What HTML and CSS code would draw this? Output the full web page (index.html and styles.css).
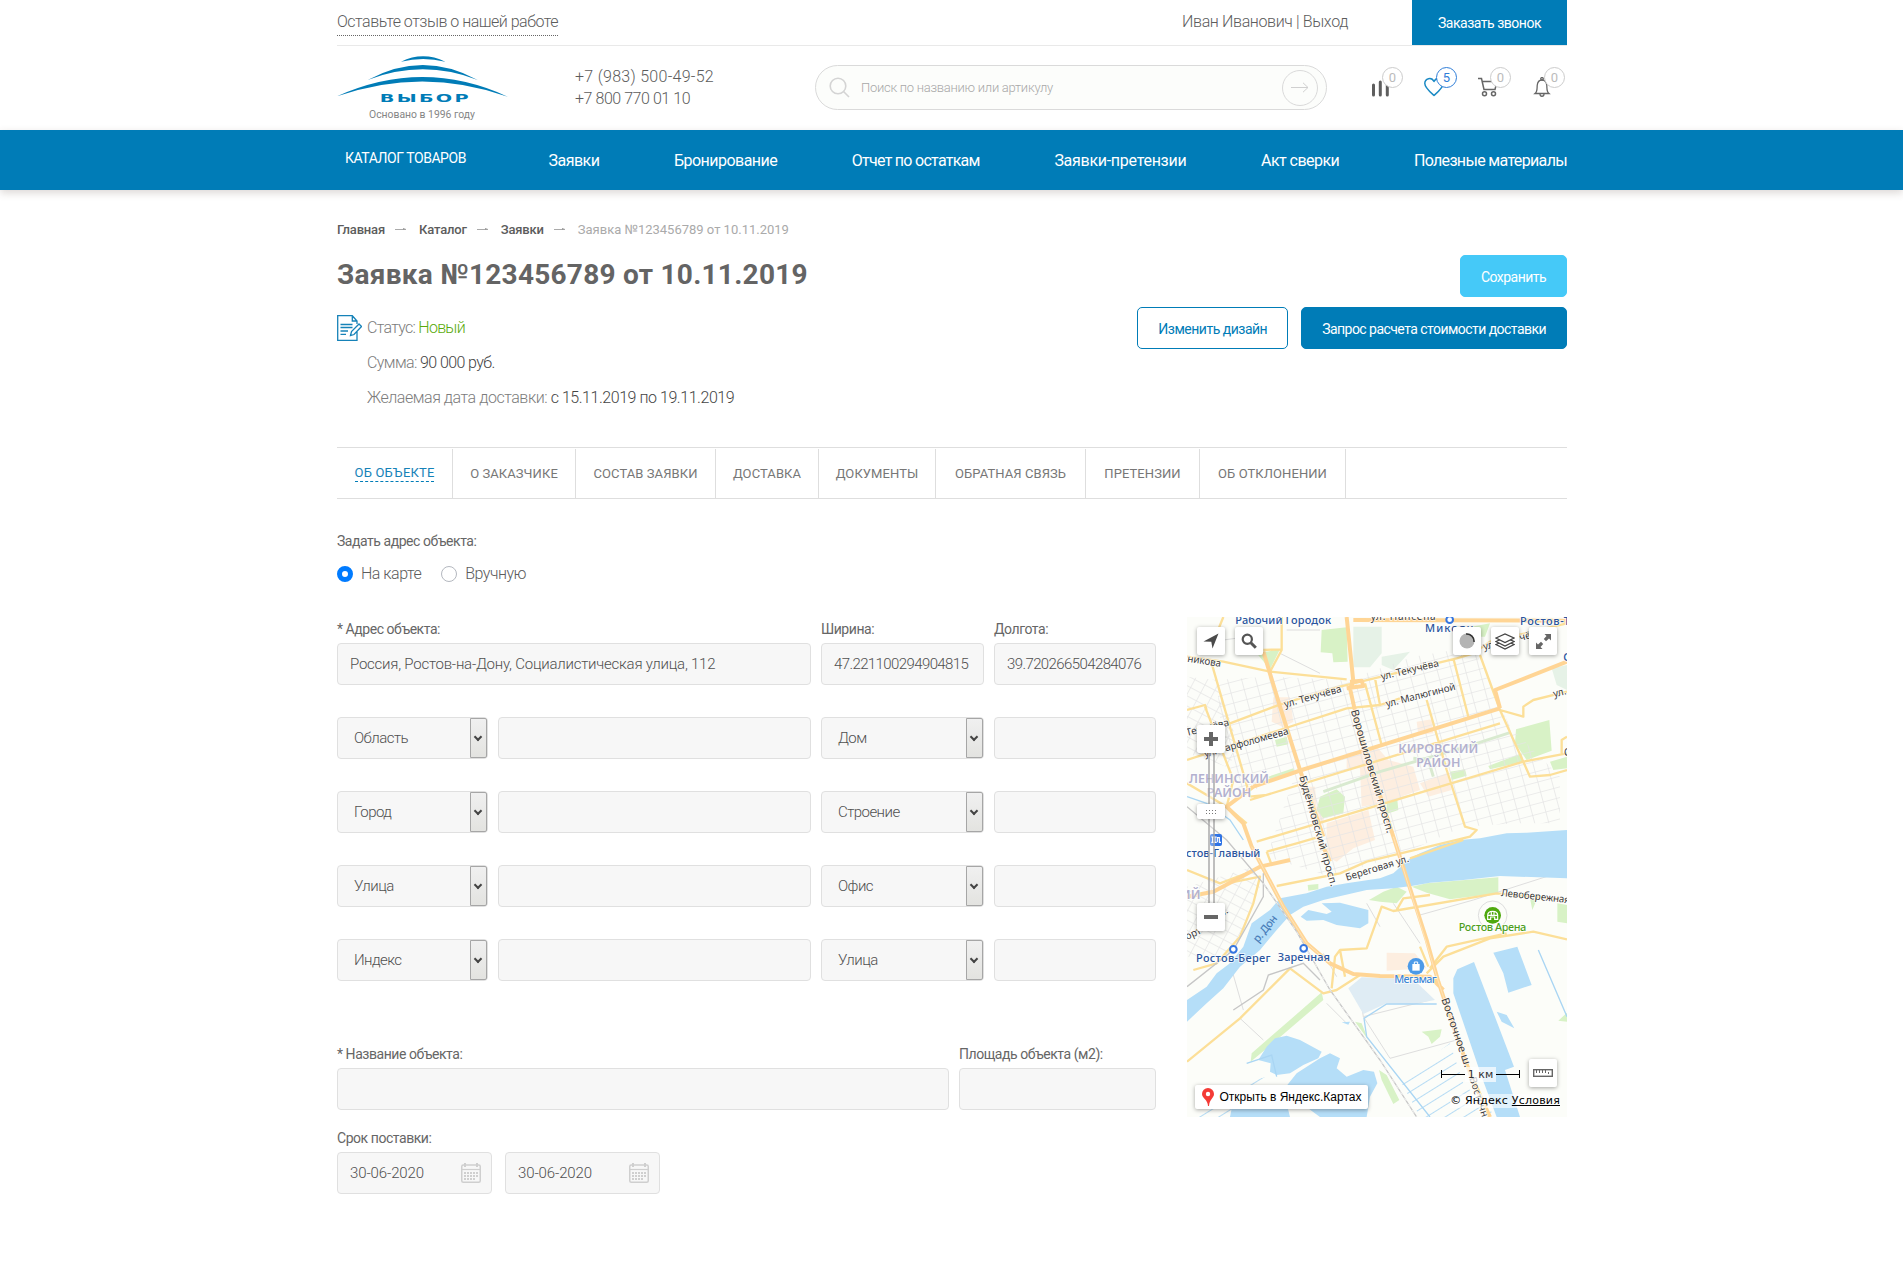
FILE: index.html
```html
<!DOCTYPE html>
<html lang="ru">
<head>
<meta charset="utf-8">
<title>Заявка №123456789 от 10.11.2019</title>
<link rel="stylesheet" href="styles.css">
</head>
<body>
<header class="header">
  <div class="container">
    <div class="topbar">
      <a class="feedback">Оставьте отзыв о нашей работе</a>
      <div class="account"><span class="user">Иван Иванович | Выход</span><a class="call">Заказать звонок</a></div>
    </div>
    <div class="brand-row">
      <a class="logo">
        <svg width="170" height="67" viewBox="0 0 510 201" fill="#007cb7">
          <path d="M192 17Q258-15 325 17Q258 1 192 17Z"/>
          <path d="M92 72Q258-18 422 72Q258 8 92 72Z"/>
          <path d="M0 121Q258 5 512 122Q258 31 0 121Z"/>
          <text x="128" y="138" class="logo-name" textLength="274" lengthAdjust="spacingAndGlyphs">ВЫБОР</text>
          <text x="96" y="187" class="logo-sub" textLength="318" lengthAdjust="spacingAndGlyphs">Основано в 1996 году</text>
        </svg>
      </a>
      <div class="phones"><span>+7 (983) 500-49-52</span><span class="p2">+7 800 770 01 10</span></div>
      <div class="search">
        <svg width="21" height="21" viewBox="0 0 21 21" fill="none" stroke="#d4d4d4" stroke-width="1.6"><circle cx="9" cy="9" r="7.8"/><path d="M14.5 14.5L20 20"/></svg>
        <span class="ph">Поиск по названию или артикулу</span>
        <span class="go"><svg width="18" height="11" viewBox="0 0 18 11" fill="none" stroke="#d0d0d0"><path d="M0 5.5H17M12 .8L17 5.5L12 10.2"/></svg></span>
      </div>
      <div class="tools">
        <a class="tool"><svg width="20" height="20" viewBox="0 0 20 20" stroke="#5e5e5e" stroke-width="3" stroke-linecap="round"><path d="M3.5 8V18M10.3 5V18M17.3 5V18"/></svg><b>0</b></a>
        <a class="tool on"><svg width="20" height="20" viewBox="0 0 20 20" fill="none" stroke="#1b8ac4" stroke-width="1.5" stroke-linejoin="round"><path d="M10 18.5C5 14 .8 10.500 .8 6.500C.8 1.500 7.500-.5 10 4.500C12.500-.5 19.200 1.500 19.200 6.500C19.200 10.500 15 14 10 18.500Z"/></svg><b>5</b></a>
        <a class="tool"><svg width="20" height="20" viewBox="0 0 20 20" fill="none" stroke="#666" stroke-width="1.500"><path d="M0 1.500H3.500L6 12.500H17L19 4.500H4.500"/><circle cx="6.500" cy="16.700" r="2"/><circle cx="15.500" cy="16.700" r="2"/></svg><b>0</b></a>
        <a class="tool"><svg width="20" height="20" viewBox="0 0 20 20" fill="none" stroke="#666" stroke-width="1.300"><path d="M3 16.500C5.500 14.500 5 11.500 5.200 8.500C5.500 5 7.500 3 10 3S14.500 5 14.800 8.500C15 11.500 14.500 14.500 17 16.500Z"/><circle cx="10" cy="1.800" r="1.300"/><path d="M8 17C8 20 12 20 12 17"/></svg><b>0</b></a>
      </div>
    </div>
  </div>
  <nav class="nav"><div class="container nav-in">
    <a class="cat">КАТАЛОГ ТОВАРОВ</a><a>Заявки</a><a>Бронирование</a><a class="stock">Отчет по остаткам</a><a class="claims">Заявки-претензии</a><a>Акт сверки</a><a class="useful">Полезные материалы</a>
  </div></nav>
</header>
<main class="container">
  <div class="crumbs">
    <a>Главная</a><i></i><a>Каталог</a><i></i><a>Заявки</a><i></i><span>Заявка №123456789 от 10.11.2019</span>
  </div>
  <section class="summary">
    <div class="info">
      <h1>Заявка №123456789 от 10.11.2019</h1>
      <div class="facts">
        <svg class="doc" width="25" height="26" viewBox="0 0 25 26" fill="none" stroke="#1682b8" stroke-width="1.300"><path d="M20 16V25.300H.7V.7H15.300L20 6V9M15.300.7V6H20M3.500 9.500H15.500M3.500 12.500H15.500M3.500 16H11M3.500 19.300H9M13.500 20.500L14.500 16.500L22 9L24.500 11.500L17 19.500Z"/></svg>
        <p class="status">Статус: <em class="new">Новый</em></p>
        <p>Сумма: <em>90 000 руб.</em></p>
        <p class="wish">Желаемая дата доставки: <em>с 15.11.2019 по 19.11.2019</em></p>
      </div>
    </div>
    <div class="actions">
      <a class="btn light">Сохранить</a>
      <div class="pair"><a class="btn line">Изменить дизайн</a><a class="btn">Запрос расчета стоимости доставки</a></div>
    </div>
  </section>
  <div class="tabs">
    <a class="active"><span>ОБ ОБЪЕКТЕ</span></a><a>О ЗАКАЗЧИКЕ</a><a>СОСТАВ ЗАЯВКИ</a><a>ДОСТАВКА</a><a>ДОКУМЕНТЫ</a><a>ОБРАТНАЯ СВЯЗЬ</a><a>ПРЕТЕНЗИИ</a><a>ОБ ОТКЛОНЕНИИ</a>
  </div>
  <div class="mode">
    <div class="label">Задать адрес объекта:</div>
    <div class="radios"><label class="radio checked">На карте</label><label class="radio">Вручную</label></div>
  </div>
  <div class="columns">
    <form class="form">
      <div class="grid">
        <div class="field wide"><span class="label">* Адрес объекта:</span><div class="input">Россия, Ростов-на-Дону, Социалистическая улица, 112</div></div>
        <div class="field coord"><span class="label">Ширина:</span><div class="input">47.221100294904815</div></div>
        <div class="field coord"><span class="label">Долгота:</span><div class="input">39.720266504284076</div></div>
        <div class="select">Область</div><div class="input"></div><div class="select">Дом</div><div class="input"></div>
        <div class="select">Город</div><div class="input"></div><div class="select">Строение</div><div class="input"></div>
        <div class="select">Улица</div><div class="input"></div><div class="select">Офис</div><div class="input"></div>
        <div class="select">Индекс</div><div class="input"></div><div class="select">Улица</div><div class="input"></div>
      </div>
      <div class="object">
        <div class="field"><span class="label">* Название объекта:</span><div class="input"></div></div>
        <div class="field"><span class="label">Площадь объекта (м2):</span><div class="input"></div></div>
      </div>
      <div class="term">
        <span class="label">Срок поставки:</span>
        <div class="dates">
          <div class="input date"><span>30-06-2020</span><svg width="20" height="20" viewBox="0 0 20 20" fill="none" stroke="#cfcfcf"><rect x=".75" y="2" width="18.500" height="17.250" rx="1.500" stroke-width="1.500"/><path d="M1 6.500H19" stroke-width="1.200"/><path d="M4 0V4M16 0V4" stroke-width="2"/><path d="M3 10H17M3 13H17M3 16H14" stroke-width="2" stroke-dasharray="2 1"/></svg></div>
          <div class="input date"><span>30-06-2020</span><svg width="20" height="20" viewBox="0 0 20 20" fill="none" stroke="#cfcfcf"><rect x=".75" y="2" width="18.500" height="17.250" rx="1.500" stroke-width="1.500"/><path d="M1 6.500H19" stroke-width="1.200"/><path d="M4 0V4M16 0V4" stroke-width="2"/><path d="M3 10H17M3 13H17M3 16H14" stroke-width="2" stroke-dasharray="2 1"/></svg></div>
        </div>
      </div>
    </form>
    <div class="map">
      <svg class="canvas" width="380" height="500" viewBox="21 21 1140 1500">
        <defs>
          <pattern id="blocks" width="41" height="31" patternUnits="userSpaceOnUse" patternTransform="rotate(-15)"><path d="M0 1H41M1 0V31" stroke="#e4e4e4" stroke-width="2.500" fill="none"/></pattern>
          <pattern id="lots" width="34" height="27" patternUnits="userSpaceOnUse" patternTransform="rotate(28)"><path d="M0 1H34M1 0V27" stroke="#e4e4e4" stroke-width="2.500" fill="none"/></pattern>
          <pattern id="canals" width="28" height="30" patternUnits="userSpaceOnUse" patternTransform="rotate(-32)"><path d="M0 1H28" stroke="#a9d5f3" stroke-width="3"/></pattern>
        </defs>
        <rect x="21" y="21" width="1140" height="1500" fill="#fcfdf9"/>
        <g fill="#fdeee0">
          <path d="M280 262L330 262L340 335L310 352L275 335ZM500 430L590 410L625 450L700 470L720 540L650 565L600 580L545 590L540 475L500 475ZM720 520L800 490L815 540L745 560ZM710 335L755 328L760 370L715 375ZM440 640L565 600L585 690L520 715L470 755L440 740ZM375 530L405 530L410 590L435 590L430 640L395 640ZM620 1028L705 1030L740 1075L620 1082Z"/>
        </g>
        <g fill="#d8f2c6">
          <path d="M425 60L500 52L503 155L460 157L457 130L422 127ZM230 130L300 118L270 178ZM875 50L930 40L915 80L880 80ZM1008 358L1108 330L1115 422L1040 450L1005 400ZM925 468L1025 430L1030 455L930 478ZM285 390L320 380L325 403L290 410ZM420 560L470 538L495 560L490 610L430 625L410 600ZM265 500L340 475L345 490L270 508ZM810 485L855 478L860 497L815 510ZM620 580L652 570L655 600L620 612ZM1110 455L1161 440L1161 475L1120 480Z"/>
          <path d="M695 830L740 820L955 802V850L810 868L740 848ZM567 870L610 845L650 830L680 845L650 880L600 875ZM383 825L415 822V838L385 842ZM1132 880L1161 885V940L1132 935ZM1050 865L1072 865L1057 900ZM425 1147L430 1170L290 1290L212 1355L215 1330ZM725 1265L785 1258L780 1280L755 1302L745 1280ZM597 1380L620 1395L658 1470L640 1482L605 1410ZM525 1235L545 1240L565 1290ZM1135 1232L1161 1208V1235Z"/>
        </g>
        <path d="M520 50H605V130L570 172H520ZM605 140L690 125L640 180L605 165ZM1115 175L1161 165V240L1130 225Z" fill="#e6f2e7"/>
        <path d="M110 210L260 200L500 210L700 140L880 110L990 350L1140 500V640L1010 640L850 650L660 735L450 800L260 740L350 480L180 560L130 430Z" fill="url(#blocks)"/>
        <path d="M21 200L110 210L180 420L140 470L21 430Z" fill="url(#lots)"/>
        <path d="M21 830L220 770L240 830L180 970L140 1040L21 1040Z" fill="url(#lots)"/>
        <g fill="none" stroke="#d9ead0" stroke-width="9"><path d="M430 545L600 485L860 410L990 368M700 445L745 450L760 500"/></g>
        <g fill="none" stroke="#dedede" stroke-width="3">
          <path d="M130 90L240 75M320 60L420 60M300 130L420 190M720 915L880 870L1130 790M540 1155L550 1220L750 1170M560 880L600 950M640 880L720 1000M430 1030L470 1100M150 1060L190 1200M180 1225L250 1290M440 1180L500 1240M550 1220L630 1345L830 1290"/>
          <circle cx="938" cy="916" r="43"/>
        </g>
        <g fill="#b5def8">
          <path d="M1161 660L1040 668L980 670L900 685L840 690L780 705L720 730L690 745L640 790L600 805L500 820L440 830L380 850L300 865L270 900L215 940L190 1010L150 1060L110 1090L80 1130L21 1170V1235L80 1180L130 1135L180 1070L240 1020L290 960L330 915L370 890L430 870L560 840L640 835L695 828L750 818L850 810L960 798L1161 805Z"/>
          <path d="M425 880L480 878L565 900V940L540 955L470 945L430 930L380 932L362 920L385 900L440 912L455 905Z"/>
          <path d="M820 1105L832 1078L882 1056L1002 1370L975 1380L1020 1521H950L905 1400L820 1150Z"/>
          <path d="M940 1028L1012 1010L1055 1125L985 1148L970 1090Z"/>
          <path d="M260 1310L285 1285L320 1277L360 1290L425 1325L415 1345L370 1365L330 1390L290 1395L270 1385L272 1360L235 1350Z"/>
          <path d="M420 1345L450 1330L480 1345L470 1375L500 1400L550 1380L582 1385L592 1420L570 1460L560 1521L420 1521L310 1440L350 1390Z"/>
          <path d="M160 1470L260 1425L310 1440L330 1521H150ZM950 1205L980 1215L1003 1255L965 1235ZM485 1237L510 1235L505 1244Z"/>
        </g>
        <path d="M505 1135L545 1102L700 1108L765 1170L700 1182L620 1180L550 1212Z" fill="#dfecf4"/>
        <path d="M660 1410L810 1300L850 1420L950 1521H720ZM40 1521L80 1450L260 1400L170 1521Z" fill="url(#canals)"/>
        <g fill="none" stroke="#a9d5f3" stroke-width="4">
          <path d="M770 1182L620 1182L552 1225L560 1280L750 1521M1075 1020L1161 1220M200 1360L275 1335L290 1400M21 560L80 580L150 630L190 690"/>
        </g>
        <g fill="none" stroke="#fcdf98" stroke-width="7" stroke-linejoin="round">
          <path d="M110 70L130 21M305 21V120L270 185L130 155L21 140M95 160L210 560L260 555M250 120L305 118M21 450L500 295L600 285M21 300L75 285L80 300M150 340L310 280L480 230L830 145L880 130L930 95L1161 40M75 290L160 510L140 590M21 520L140 590L200 640M500 208L270 185M555 220L605 405M585 205L600 285L660 265M740 270L800 480L855 650L890 660L870 680L560 755L480 790L290 828M820 145L865 320M900 135L960 300L1050 500L1110 495L1161 480M960 300L1030 320V290L1060 270L1161 245M210 570L960 340M230 695L1030 455L1161 430M260 725L350 700L420 680M690 745L850 690M21 780L120 820L200 790M140 820L240 800L220 880L180 980L110 1060L40 1080M21 1355L180 1225L330 1075L430 1150L470 1140L540 1095M455 1135L465 1040L480 1020L560 1015L605 890L640 903L950 850L1161 870M650 900L670 865L750 855M480 1020L495 1100M720 1010L745 1070M740 1090L790 1040L930 985L1060 965L1161 988M750 1075L800 1010L980 970M1161 380L1145 390V430M260 725L275 765"/>
        </g>
        <g fill="none" stroke="#ffd595" stroke-width="12" stroke-linejoin="round">
          <path d="M500 21L520 215L510 235L540 370L640 680L740 990L775 1115L800 1190L870 1390L930 1521M250 125L300 290L360 480L430 680M420 690L450 755M220 530L365 480L960 295M1161 155L945 240L960 295M520 30L1161 32M220 530L140 590L190 640L215 710L310 890L380 1000L450 1060L520 1092L600 1098L750 1100L790 1140M21 860L100 845L240 770L330 750M500 235L550 228L545 212L510 215"/>
        </g>
        <g fill="none" stroke="#ffeccb" stroke-width="2"><path d="M215 710L310 890L380 1000L450 1060M640 680L775 1115L800 1190"/></g>
        <g fill="none" stroke="#c6c6c6" stroke-width="4"><path d="M21 590L140 690L250 820L350 965L450 1140L600 1350L710 1521M250 790V860L160 1020L21 1130M160 1200L250 1140L265 1095L370 1060L420 1110"/></g>
        <path d="M250 820L350 965L450 1140L600 1350L710 1521" fill="none" stroke="#f5f5f5" stroke-width="2.500" stroke-dasharray="12 10"/>
        <g class="street">
          <text x="21" y="155" textLength="102" transform="rotate(9 21 155)">никова</text>
          <text x="605" y="210" textLength="178" transform="rotate(-13.500 605 210)">ул. Текучёва</text>
          <text x="315" y="293" textLength="178" transform="rotate(-15.500 315 293)">ул. Текучёва</text>
          <text x="620" y="292" textLength="215" transform="rotate(-14.500 620 292)">ул. Малюгиной</text>
          <text x="1122" y="262" transform="rotate(-14 1122 262)">ул.</text>
          <text x="21" y="378" textLength="132" transform="rotate(-14 21 378)">Текучёва</text>
          <text x="75" y="442" textLength="262" transform="rotate(-15.500 75 442)">ул. Варфоломеева</text>
          <text x="912" y="120" textLength="180" transform="rotate(-14 912 120)">ул. Текучёва</text>
          <text x="572" y="30" textLength="195">ул. Нансена</text>
          <text class="avenue" x="512" y="302" textLength="385" lengthAdjust="spacingAndGlyphs" transform="rotate(73.500 512 302)">Ворошиловский просп.</text>
          <text x="358" y="500" textLength="345" lengthAdjust="spacingAndGlyphs" transform="rotate(74 358 500)">Будённовский просп.</text>
          <text x="500" y="812" textLength="197" transform="rotate(-17 500 812)">Береговая ул.</text>
          <text x="962" y="858" textLength="208" transform="rotate(6 962 858)">Левобережная</text>
          <text class="avenue" x="784" y="1168" textLength="218" lengthAdjust="spacingAndGlyphs" transform="rotate(71 784 1168)">Восточное ш.</text>
          <text x="868" y="1405" textLength="160" transform="rotate(72 868 1405)">Восточное</text>
          <text x="21" y="990" transform="rotate(-25 21 990)">орт</text><text x="124" y="920" transform="rotate(-30 124 920)">л.</text>
          <text x="1152" y="437">С</text>
        </g>
        <g class="district" text-anchor="middle">
          <text x="775" y="430" textLength="240" lengthAdjust="spacingAndGlyphs">КИРОВСКИЙ</text><text x="775" y="471" textLength="133" lengthAdjust="spacingAndGlyphs">РАЙОН</text>
          <text x="147" y="519" textLength="240" lengthAdjust="spacingAndGlyphs">ЛЕНИНСКИЙ</text><text x="147" y="560" textLength="133" lengthAdjust="spacingAndGlyphs">РАЙОН</text>
          <text x="32" y="867">ИЙ</text>
        </g>
        <g class="station">
          <text x="166" y="42" textLength="287">Рабочий Городок</text>
          <text x="735" y="66" textLength="145">Микоян</text>
          <text x="1020" y="44" textLength="150">Ростов-Т</text>
          <text x="1150" y="153">С</text>
          <text x="18" y="740" textLength="223">стов-Главный</text>
          <text x="48" y="1055" textLength="223">Ростов-Берег</text>
          <text x="293" y="1053" textLength="157">Заречная</text>
          <text x="234" y="1000" textLength="95" transform="rotate(-51 234 1000)" class="river">р. Дон</text>
          <text x="643" y="1120" textLength="127" class="shop">Мегамаг</text>
          <text x="836" y="964" textLength="203" class="arena">Ростов Арена</text>
        </g>
        <g fill="#fff" stroke="#3576e0" stroke-width="6"><circle cx="809" cy="29" r="10"/><circle cx="160" cy="1018" r="10"/><circle cx="371" cy="1015" r="10"/></g>
        <rect x="90" y="672" width="36" height="36" rx="6" fill="#2f74e6"/><path d="M94 681H110M94 697H110M98 681V697M105 681V697M112 697V683H118V697H123" stroke="#fff" stroke-width="3.500" fill="none"/>
        <circle cx="938" cy="916" r="25" fill="#4fa90e"/><path d="M923 916C923 900 953 900 953 916M923 916V928H932V921H944V928H953V916H923M934 906V916M942 906V916" stroke="#fff" stroke-width="3.500" fill="none"/>
        <circle cx="708" cy="1069" r="25" fill="#4c9ae8"/><path d="M697 1062H719V1082H697Z" fill="#fff"/><path d="M703 1062V1056H713V1062" stroke="#fff" stroke-width="3" fill="none"/>
      </svg>
      <span class="ctl geo"><svg width="16" height="16" viewBox="0 0 16 16"><path d="M.5 8.500L15.500 .5L9.500 15.500L8.300 8.700Z" fill="#4a4a4a"/></svg></span>
      <span class="ctl find"><svg width="16" height="16" viewBox="0 0 16 16" fill="none" stroke="#555"><circle cx="6.300" cy="6.300" r="4.600" stroke-width="2.200"/><path d="M9.800 9.800L14.800 14.800" stroke-width="3"/></svg></span>
      <span class="ctl traffic"><svg width="16" height="16" viewBox="0 0 16 16"><circle cx="8" cy="8" r="7.500" fill="#b4b4b4"/><path d="M7 1A7.300 7.300 0 0 1 15 9" fill="none" stroke="#333" stroke-width="1.500"/></svg></span>
      <span class="ctl layers"><svg width="20" height="17" viewBox="0 0 20 17" fill="#fff" stroke="#444" stroke-width="1.300"><path d="M1 11.500L10 7.500L19 11.500L10 16Z"/><path d="M1 8.500L10 4.500L19 8.500L10 13Z"/><path d="M1 5L10 1L19 5L10 9.500Z"/></svg></span>
      <span class="ctl full"><svg width="15" height="15" viewBox="0 0 15 15" fill="#666"><path d="M15 0V6.500L13 4.500L10 7.200L7.800 5L10.500 2L8.500 0ZM0 15V8.500L2 10.500L5 7.800L7.200 10L4.500 13L6.500 15Z"/></svg></span>
      <span class="track"></span>
      <span class="ctl plus"><svg width="14" height="14" viewBox="0 0 14 14" stroke="#666" stroke-width="4"><path d="M0 7H14M7 0V14"/></svg></span>
      <span class="ctl grip"><svg width="11" height="4" viewBox="0 0 11 4" stroke="#777" stroke-dasharray="1 2"><path d="M0 .5H11M0 3.500H11"/></svg></span>
      <span class="ctl minus"><svg width="14" height="4" viewBox="0 0 14 4"><path d="M0 0H14V4H0Z" fill="#666"/></svg></span>
      <span class="ctl ruler"><svg width="20" height="8" viewBox="0 0 20 8" fill="none" stroke="#666"><rect x=".7" y=".7" width="18.600" height="6.600" stroke-width="1.400"/><path d="M3.500 1V4M6.500 1V4M9.500 1V4M12.500 1V4M15.500 3V5"/></svg></span>
      <span class="scale"><i></i><span>1 км</span><i></i></span>
      <span class="open"><svg width="12" height="18" viewBox="0 0 12 18"><path d="M6 0A6 6 0 0 1 12 6C12 10 7.500 11 7 18H6C6 12 0 10 0 6A6 6 0 0 1 6 0Z" fill="#f43b36"/><circle cx="6" cy="6" r="2.200" fill="#fff"/></svg>Открыть в Яндекс.Картах</span>
      <span class="copy">© Яндекс <u>Условия</u></span>
    </div>
  </div>
</main>
</body>
</html>
```
FILE: styles.css
```css
*, *::before, *::after { box-sizing: border-box; }
body { margin: 0; height: 1270px; background: #fff; color: #5c5c5c; font: 300 16px/20px Roboto, "Liberation Sans", sans-serif; letter-spacing: -.6px; overflow: hidden; }
.container { width: 1230px; margin: 0 auto; position: relative; left: .5px; }
h1, p { margin: 0; }
em { font-style: normal; color: #444; }

.topbar { display: flex; justify-content: space-between; align-items: flex-start; height: 46px; border-bottom: 1px solid #e9e9e9; }
.feedback { margin-top: 12px; padding-bottom: 3px; border-bottom: 1px dotted #666; letter-spacing: -.49px; }
.account { display: flex; gap: 64px; }
.user { margin-top: 12px; letter-spacing: -.36px; }
.call { width: 155px; height: 45px; background: #007cb7; color: #fff; font-size: 14px; line-height: 46px; text-align: center; font-weight: 400; letter-spacing: -.48px; }

.brand-row { display: flex; height: 84px; }
.logo { margin-top: 10px; width: 238px; letter-spacing: 0; }
.logo svg { display: block; overflow: visible; }
.logo-name { font: bold 33px "DejaVu Sans", sans-serif; letter-spacing: 4px; }
.logo-sub { font: 34px Roboto, sans-serif; fill: #858585; }
.phones { display: flex; flex-direction: column; width: 240px; padding-top: 20px; line-height: 22px; letter-spacing: .28px; }
.phones .p2 { letter-spacing: -.45px; }
.search { display: flex; align-items: center; width: 512px; height: 45px; margin-top: 19px; padding: 0 8px 0 13px; border: 1px solid #dadada; border-radius: 23px; background: #fcfdfb; }
.ph { margin-left: 11px; color: #a8a8a8; font-size: 13px; letter-spacing: -.27px; }
.go { display: flex; align-items: center; justify-content: center; width: 36px; height: 36px; margin-left: auto; border: 1px solid #dadada; border-radius: 50%; }
.tools { display: flex; gap: 34px; margin: 31px 0 0 43px; }
.tool { position: relative; width: 20px; height: 20px; }
.tool b { position: absolute; left: 12px; top: -10px; width: 21px; height: 21px; border: 1px solid #ccc; border-radius: 50%; background: #fff; color: #bbb; font: 13px/19px Roboto, sans-serif; letter-spacing: 0; text-align: center; }
.tool.on b { border-color: #2f7ed8; color: #2f7ed8; }

.nav { height: 60px; background: #007cb7; color: #fff; font-weight: 400; box-shadow: 0 3px 8px rgba(80, 60, 50, .2); }
.nav-in { display: flex; justify-content: space-between; align-items: center; height: 61px; letter-spacing: -.54px; }
.stock { letter-spacing: -.73px; }
.claims { letter-spacing: -.28px; }
.useful { letter-spacing: -.66px; }
.cat { padding: 0 8px; margin-top: -5px; font-size: 14px; letter-spacing: -.45px; }

.crumbs { display: flex; align-items: center; padding-top: 30px; height: 49px; font-size: 13px; font-weight: 500; letter-spacing: -.17px; }
.crumbs i { width: 11px; height: 1px; margin: 0 13px 0 10px; background: #aaa; position: relative; }
.crumbs i::after { content: ""; position: absolute; right: 0; top: -1px; border-left: 3px solid #999; border-top: 1.5px solid transparent; border-bottom: 1.5px solid transparent; }
.crumbs span { color: #aaa; font-weight: 400; letter-spacing: 0; }
.summary { display: flex; justify-content: space-between; height: 208px; }
h1 { margin-top: 20px; color: #646464; font-size: 28px; line-height: 32px; font-weight: 700; letter-spacing: .26px; }
.facts { position: relative; padding: 19px 0 0 30px; color: #7c7c7c; }
.facts p { height: 35px; padding-top: 8px; }
.facts .status { letter-spacing: -.72px; }
.facts .wish { letter-spacing: -.45px; }
.doc { position: absolute; left: 0; top: 24px; }
.facts .new { color: #5aaa0a; }
.actions { display: flex; flex-direction: column; align-items: flex-end; gap: 10px; margin-top: 16px; }
.pair { display: flex; gap: 13px; }
.btn { height: 42px; padding: 0 20px; border: 1px solid #007cb7; border-radius: 5px; background: #007cb7; color: #fff; font-size: 14px; font-weight: 400; line-height: 42px; letter-spacing: -.54px; white-space: nowrap; }
.light { background: #45c9f8; border-color: #45c9f8; }
.line { background: #fff; color: #007cb7; letter-spacing: -.49px; }

.tabs { display: grid; grid-template-columns: 116px 123px 140px 103px 117px 150px 114px 146px; height: 52px; padding-top: 1px; border-top: 1px solid #dedede; border-bottom: 1px solid #dedede; font-size: 13px; font-weight: 400; color: #777; letter-spacing: .08px; }
.tabs a { display: flex; align-items: center; justify-content: center; border-right: 1px solid #dedede; white-space: nowrap; }
.active span { color: #1682b8; border-bottom: 1px dashed #007cb7; line-height: 16px; letter-spacing: .17px; }
.mode { padding-top: 32px; }
.label { display: block; color: #666; font-size: 14px; font-weight: 400; line-height: 20px; letter-spacing: -.45px; }
.radios { display: flex; gap: 20px; margin-top: 13px; letter-spacing: -.5px; }
.radio { display: flex; align-items: center; gap: 8px; }
.radio::before { content: ""; width: 16px; height: 16px; border: 1px solid #b4b8bf; border-radius: 50%; }
.radio.checked::before { border: 5px solid #007bff; }

.columns { display: flex; justify-content: space-between; align-items: flex-start; padding-top: 33px; }
.form { width: 820px; padding-top: 2px; }
.grid { display: grid; grid-template-columns: 151px 313px 163px 162px; gap: 32px 10px; }
.wide { grid-column: span 2; }
.field .input, .dates { margin-top: 4px; }
.input, .select { height: 42px; border: 1px solid #e0e0e0; border-radius: 4px; background: #f7f7f7; color: #505050; font-size: 15px; line-height: 40px; padding-left: 12px; white-space: nowrap; letter-spacing: -.23px; }
.coord .input { letter-spacing: -.6px; }
.select { position: relative; padding-left: 16px; letter-spacing: -.55px; }
.select::before { content: ""; position: absolute; right: 0; top: 0; width: 17px; height: 40px; border: 1px solid #a6a6a6; border-radius: 0 2px 2px 0; background: linear-gradient(#f0f0f0, #e3e3e0); }
.select::after { content: ""; position: absolute; right: 6px; top: 16px; width: 6px; height: 6px; border: solid #444; border-width: 0 2px 2px 0; transform: rotate(45deg); }
.object { display: grid; grid-template-columns: 612px 197px; gap: 10px; margin-top: 63px; }
.term { margin-top: 18px; }
.dates { display: flex; gap: 13px; }
.date { display: flex; justify-content: space-between; align-items: center; width: 155px; padding-right: 10px; letter-spacing: -.12px; }

.map { position: relative; width: 380px; height: 500px; overflow: hidden; letter-spacing: 0; }
.canvas { display: block; }
.street { font: 30px "Noto Sans", sans-serif; fill: #3c3c3c; }
.street .avenue { font-size: 32px; }
.district { font: 600 38px "Noto Sans", sans-serif; fill: #b3b1cf; }
.station { font: 500 33px "Noto Sans", sans-serif; fill: #2a559e; }
.shop { fill: #3d87d6; }
.arena { fill: #4d9e1c; }
.river { fill: #4a7fba; }
.map text { paint-order: stroke; stroke: rgba(255, 255, 255, .8); stroke-width: 5px; }
.map .river { stroke: none; }
.ctl, .open { position: absolute; display: flex; align-items: center; justify-content: center; width: 28px; height: 28px; border-radius: 2px; background: #fff; box-shadow: 0 1px 4px rgba(0, 0, 0, .35); }
.geo { left: 10px; top: 10px; }
.find { left: 48px; top: 10px; }
.traffic { left: 266px; top: 10px; }
.layers { left: 304px; top: 10px; }
.full { left: 342px; top: 10px; }
.plus { left: 10px; top: 108px; }
.grip { left: 10px; top: 187px; height: 15px; }
.minus { left: 10px; top: 286px; }
.ruler { left: 342px; top: 442px; }
.track { position: absolute; left: 21px; top: 136px; width: 7px; height: 150px; border: solid rgba(150, 150, 150, .6); border-width: 0 2px; background: rgba(255, 255, 255, .3); }
.open { left: 8px; top: 468px; width: 173px; height: 24px; gap: 6px; color: #000; font: 12px "Liberation Sans", sans-serif; white-space: nowrap; }
.scale { position: absolute; left: 254px; top: 449px; display: flex; align-items: center; width: 79px; height: 16px; color: #333; font: 11px "DejaVu Sans", sans-serif; }
.scale i { flex: 1; height: 8px; border-left: 1px solid #000; background: linear-gradient(#000, #000) 0 50% / 100% 1px no-repeat; }
.scale i:last-child { border-left: 0; border-right: 1px solid #000; }
.scale span { padding: 1px 3px; background: rgba(255, 255, 255, .7); }
.copy { position: absolute; right: 7px; top: 477px; color: #000; font: 11px/14px "DejaVu Sans", sans-serif; letter-spacing: .2px; background: rgba(255, 255, 255, .6); white-space: nowrap; }
```
